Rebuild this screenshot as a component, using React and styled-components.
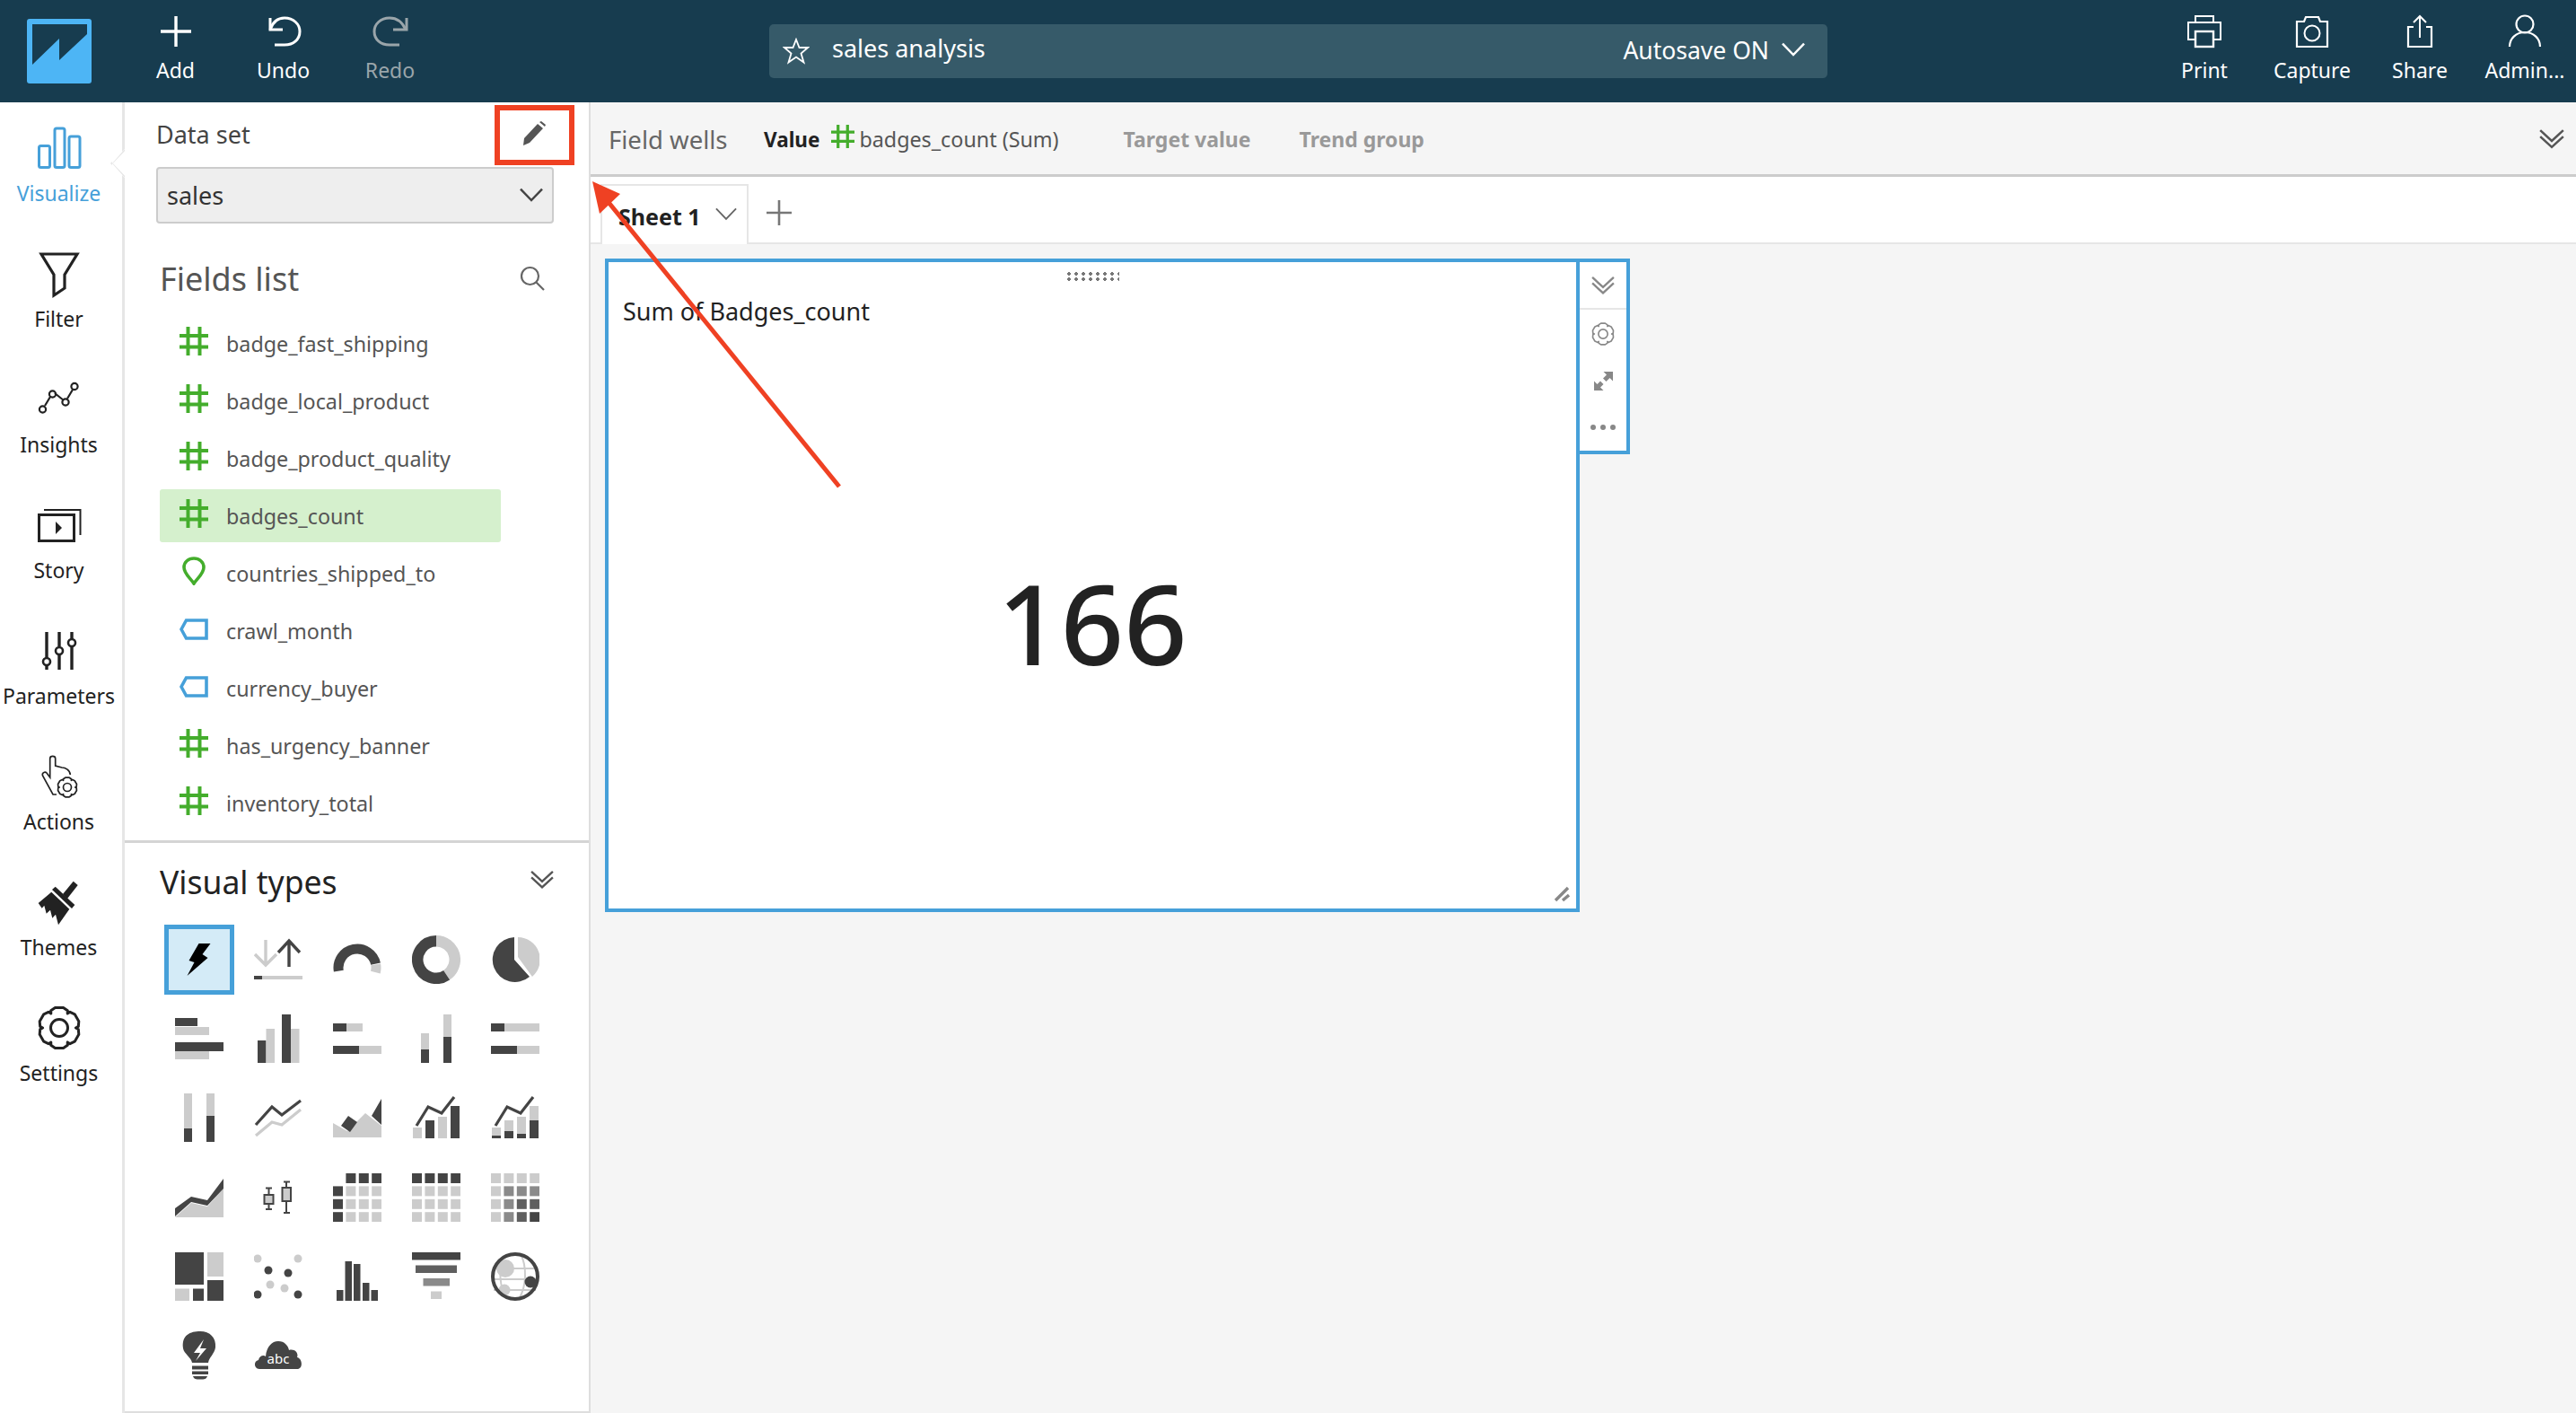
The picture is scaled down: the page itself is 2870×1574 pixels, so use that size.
import styled, { createGlobalStyle } from 'styled-components';

const DARK = '#444';
const LIGHT = '#ccc';
const MID = '#8a8a8a';
const DIM = '#5f5f5f';
const BLUE = '#46a0d9';
const GREEN = '#44ad2c';

const GlobalStyle = createGlobalStyle`
  html, body { margin: 0; padding: 0; background: #fff; }
  body { font-family: "Noto Sans", "Open Sans", sans-serif; }
  * { box-sizing: border-box; }
`;

const Page = styled.div`
  position: relative;
  width: 2870px;
  height: 1574px;
  display: flex;
  flex-direction: column;
  overflow: hidden;
`;

/* top bar */
const Header = styled.header`
  height: 114px;
  flex: none;
  display: flex;
  align-items: center;
  background: #173c4f;
`;

const LogoWrap = styled.div`
  width: 136px;
  padding-left: 30px;
  display: flex;
`;

const HeaderButton = styled.div`
  width: ${({ $w }) => $w || 119}px;
  height: 100%;
  display: flex;
  flex-direction: column;
  align-items: center;
  color: ${({ $disabled }) => ($disabled ? '#9aa5aa' : '#fff')};
  font-size: 23px;
  line-height: 30px;
  padding-top: 15px;
  white-space: nowrap;

  svg { height: 40px; width: 48px; margin-bottom: 8px; flex: none; }
`;

const TitleBar = styled.div`
  width: 1179px;
  height: 60px;
  margin-left: 364px;
  padding: 0 25px 0 15px;
  display: flex;
  align-items: center;
  border-radius: 5px;
  background: #365a69;
  color: #fff;
  font-size: 27px;
`;

const TitleText = styled.span`
  margin-left: 25px;
  padding-bottom: 7px;
  flex: 1;
`;

const Autosave = styled.span`
  display: flex;
  align-items: center;
  gap: 14px;
  padding-bottom: 3px;
  font-size: 26.5px;
`;

const HeaderRight = styled.div`
  margin-left: auto;
  height: 100%;
  display: flex;
`;

/* body */
const Body = styled.div`
  flex: 1;
  display: flex;
  min-height: 0;
`;

const Rail = styled.nav`
  position: relative;
  width: 139px;
  flex: none;
  padding: 21px 5px 0 0;
  border-right: 3px solid #e6e6e6;
  background: #fff;
`;

const RailPointer = styled.div`
  position: absolute;
  right: -3px;
  top: 52px;
  width: 16px;
  height: 32px;
  background: #fff;
  border-left: 2px solid #e6e6e6;
  clip-path: polygon(100% 0, 0 50%, 100% 100%);
  &::before {
    content: '';
    position: absolute;
    inset: 0;
    background: #e6e6e6;
    clip-path: polygon(100% 0, 0 50%, 100% 100%, 100% 93%, 6% 50%, 100% 7%);
  }
`;

const RailItem = styled.div`
  height: 140px;
  display: flex;
  flex-direction: column;
  align-items: center;
  color: ${({ $active }) => ($active ? BLUE : '#222')};
  font-size: 23px;
  line-height: 28px;
  white-space: nowrap;

  svg { width: 60px; height: 60px; margin-bottom: 6px; flex: none; }
`;

const Panel = styled.aside`
  position: relative;
  width: 519px;
  flex: none;
  padding-left: 35px;
  border-right: 2px solid #dedede;
  border-bottom: 2px solid #dedede;
  background: #fff;
`;

const DataHead = styled.div`
  height: 70px;
  margin-bottom: 2px;
  width: 443px;
  display: flex;
  align-items: center;
  justify-content: space-between;
  padding-right: 9px;
  color: #444;
  font-size: 27px;
`;

const RedBox = styled.div`
  position: absolute;
  left: 412px;
  top: 3px;
  width: 89px;
  height: 67px;
  border: 6px solid #ef4123;
`;

const Select = styled.div`
  width: 443px;
  height: 63px;
  padding: 0 10px;
  display: flex;
  align-items: center;
  justify-content: space-between;
  border: 2px solid #ccc;
  border-radius: 4px;
  background: #eee;
  color: #333;
  font-size: 27px;
`;

const ListHead = styled.div`
  height: 84px;
  margin-top: 20px;
  width: 443px;
  padding: 0 10px 2px 4px;
  display: flex;
  align-items: center;
  justify-content: space-between;
  color: #555;
  font-size: 36px;
`;

const FieldList = styled.div`
  display: flex;
  flex-direction: column;
  gap: 5px;
`;

const FieldRow = styled.div`
  width: 380px;
  height: 59px;
  margin-left: 4px;
  padding-left: 22px;
  display: flex;
  align-items: center;
  gap: 20px;
  border-radius: 3px;
  background: ${({ $selected }) => ($selected ? '#d5f0cd' : 'transparent')};
  color: #555;
  font-size: 23.3px;

  svg { width: 32px; height: 32px; flex: none; margin-top: -5px; }
`;

const Divider = styled.div`
  height: 3px;
  margin: 12px 0 0 -35px;
  background: #d4d4d4;
`;

const VisualHead = styled.div`
  width: 443px;
  height: 86px;
  padding: 0 0 0 4px;
  display: flex;
  align-items: center;
  justify-content: space-between;
  color: #222;
  font-size: 35.5px;

  svg { margin-top: -4px; }
`;

const VisualGrid = styled.div`
  margin-left: 4px;
  display: grid;
  grid-template-columns: repeat(5, 88px);
  grid-auto-rows: 88.2px;
`;

const VisualCell = styled.div`
  display: flex;
  align-items: center;
  justify-content: center;

  svg { width: 54px; height: 54px; }
`;

const SelectedTile = styled.div`
  width: 78px;
  height: 78px;
  display: flex;
  align-items: center;
  justify-content: center;
  border: 5px solid ${BLUE};
  background: #d4ebf7;
`;

/* work area */
const Work = styled.main`
  flex: 1;
  min-width: 0;
  display: flex;
  flex-direction: column;
`;

const WellsBar = styled.div`
  height: 83px;
  flex: none;
  padding: 2px 13px 0 20px;
  display: flex;
  align-items: center;
  border-bottom: 3px solid #ccc;
  background: #f5f5f5;
`;

const WellsTitle = styled.span`
  width: 173px;
  color: #666;
  font-size: 27.5px;
`;

const WellLabel = styled.span`
  color: ${({ $muted }) => ($muted ? '#999' : '#222')};
  font-size: ${({ $bold }) => ($bold ? 22.5 : 23)}px;
  font-weight: 700;
  margin-right: ${({ $gap }) => $gap || 0}px;
`;

const WellField = styled.span`
  display: flex;
  align-items: center;
  gap: 5px;
  margin-right: 72px;
  margin-left: 13px;
  color: #555;
  font-size: 23.3px;

  svg { width: 26px; height: 26px; margin-top: -6px; }
`;

const WellsEnd = styled.span`
  margin-left: auto;
  display: flex;
`;

const TabBar = styled.div`
  height: 75px;
  flex: none;
  padding-left: 11px;
  display: flex;
  align-items: flex-end;
  border-bottom: 2px solid #e6e6e6;
  background: #fff;
`;

const Tab = styled.div`
  width: 165px;
  height: 67px;
  margin-bottom: -2px;
  padding: 2px 11px 0 18px;
  display: flex;
  align-items: center;
  justify-content: space-between;
  border: 2px solid #e6e6e6;
  border-bottom: 0;
  background: #fff;
  color: #222;
  font-size: 25px;
  font-weight: 700;
  white-space: nowrap;

  svg { margin-top: -4px; }
`;

const AddTab = styled.div`
  height: 67px;
  margin-left: 19px;
  display: flex;
  align-items: center;
`;

const Canvas = styled.div`
  flex: 1;
  padding: 16px 0 0 16px;
  display: flex;
  align-items: flex-start;
  background: #f5f5f5;
`;

const Visual = styled.section`
  position: relative;
  width: 1086px;
  height: 728px;
  display: flex;
  flex-direction: column;
  border: 4px solid ${BLUE};
  background: #fff;
`;

const Grip = styled.div`
  position: absolute;
  left: 509px;
  top: 10px;
  width: 60px;
  height: 12px;
  background-image: radial-gradient(circle, #777 0 1.6px, transparent 2px);
  background-size: 8px 6px;
`;

const VisualTitle = styled.div`
  padding: 37px 0 9px 16px;
  color: #222;
  font-size: 27px;
  line-height: 36px;
`;

const BigNumber = styled.div`
  flex: 1;
  display: flex;
  align-items: center;
  justify-content: center;
  color: #222;
  font-size: 123px;
  font-weight: 500;
  line-height: 1;
`;

const ResizeHandle = styled.svg`
  position: absolute;
  right: 7px;
  bottom: 7px;
  width: 18px;
  height: 18px;
`;

const VisualTools = styled.div`
  width: 56px;
  height: 218px;
  display: flex;
  flex-direction: column;
  align-items: center;
  border: 4px solid ${BLUE};
  border-left: 0;
  background: #fff;
`;

const ToolTop = styled.div`
  width: 100%;
  height: 53px;
  flex: none;
  display: flex;
  align-items: center;
  justify-content: center;
  border-bottom: 2px solid #e6e6e6;
`;

const ToolItem = styled.div`
  height: ${({ $h }) => $h}px;
  flex: none;
  display: flex;
  align-items: center;
  justify-content: center;
`;

const ArrowOverlay = styled.svg`
  position: absolute;
  left: 0;
  top: 0;
  width: 2870px;
  height: 1574px;
  pointer-events: none;
`;

/* small drawings */
const ChevronDown = ({ size = 26, color = '#444', width = 2.5 }) => (
  <svg width={size} height={size * 0.62} viewBox="0 0 26 16" fill="none" stroke={color} strokeWidth={width}>
    <path d="M1 1.5 L13 14 L25 1.5" />
  </svg>
);

const DoubleChevron = ({ size = 26, color = '#555' }) => (
  <svg width={size} height={size * 0.84} viewBox="0 0 26 22" fill="none" stroke={color} strokeWidth="2.4">
    <path d="M1 2 L13 13 L25 2" />
    <path d="M1 8.5 L13 19.5 L25 8.5" />
  </svg>
);

const GearPath = ({ cx, cy, r, hole, color, width }) => {
  // six flat lobes with shallow valleys
  const pts = [];
  for (let i = 0; i < 6; i++) {
    const a = (Math.PI / 3) * i - Math.PI / 2;
    const p = (rad, ang) => `${cx + rad * Math.cos(ang)} ${cy + rad * Math.sin(ang)}`;
    pts.push(p(r, a - 0.2), p(r, a + 0.2), p(r * 0.93, a + 0.45), p(r * 0.8, a + Math.PI / 6), p(r * 0.93, a + Math.PI / 3 - 0.45));
  }
  return (
    <g fill="none" stroke={color} strokeWidth={width}>
      <path d={`M${pts.join(' L')} Z`} strokeLinejoin="round" />
      <circle cx={cx} cy={cy} r={hole} />
    </g>
  );
};

const Hash = ({ color = GREEN }) => (
  <svg viewBox="0 0 32 32" fill="none" stroke={color} strokeWidth="4">
    <path d="M9.5 0 V32 M22.5 0 V32 M0 10 H32 M0 22.5 H32" />
  </svg>
);

const Pin = () => (
  <svg viewBox="0 0 32 32" fill="none" stroke={GREEN} strokeWidth="3.6">
    <path d="M16 30 C12 24 5 19 5 12 C5 6 10 2 16 2 C22 2 27 6 27 12 C27 19 20 24 16 30 Z" />
  </svg>
);

const Tag = () => (
  <svg viewBox="0 0 32 32" fill="none" stroke={BLUE} strokeWidth="3.6">
    <path d="M7.5 7 H30 V27 H7.5 L2 17 Z" />
  </svg>
);

const fieldIcons = { num: Hash, geo: Pin, dim: Tag };

const fields = [
  ['badge_fast_shipping', 'num'],
  ['badge_local_product', 'num'],
  ['badge_product_quality', 'num'],
  ['badges_count', 'num', true],
  ['countries_shipped_to', 'geo'],
  ['crawl_month', 'dim'],
  ['currency_buyer', 'dim'],
  ['has_urgency_banner', 'num'],
  ['inventory_total', 'num'],
];

/* rail icons, 60x60 boxes */
const railIcons = {
  Visualize: (
    <svg viewBox="0 0 60 60" fill="none" stroke={BLUE} strokeWidth="3">
      <rect x="7.5" y="27.5" width="12" height="24" rx="2" />
      <rect x="25" y="8" width="11" height="43.5" rx="2" />
      <rect x="41" y="17" width="12" height="34.5" rx="2" />
    </svg>
  ),
  Filter: (
    <svg viewBox="0 0 60 60" fill="none" stroke="#222" strokeWidth="3.2">
      <path d="M10 8 H50 L36 31 V46 L24 54 V31 Z" />
    </svg>
  ),
  Insights: (
    <svg viewBox="0 0 60 60" fill="none" stroke="#222" strokeWidth="2.2">
      <path d="M14 37 L20 27 M25 23 L35 31 M39 29 L45 19" />
      <circle cx="11.5" cy="41" r="3.6" />
      <circle cx="22.5" cy="24" r="3.6" />
      <circle cx="37" cy="33" r="3.6" />
      <circle cx="47" cy="15.5" r="3.6" />
    </svg>
  ),
  Story: (
    <svg viewBox="0 0 60 60" fill="none" stroke="#222" strokeWidth="3">
      <rect x="7.5" y="18.5" width="39" height="29" />
      <path d="M13 13 H53.5 V41" strokeWidth="2" />
      <path d="M26 26 L33 33 L26 40 Z" fill="#222" stroke="none" />
    </svg>
  ),
  Parameters: (
    <svg viewBox="0 0 60 60" fill="none" stroke="#222" strokeWidth="3.4">
      <path d="M16 9 V38 M16 47 V51 M30 9 V25 M30 34 V51 M44 9 V17 M44 26 V51" />
      <circle cx="16" cy="42" r="4" strokeWidth="2.6" />
      <circle cx="30" cy="30" r="4" strokeWidth="2.6" />
      <circle cx="44" cy="21" r="4" strokeWidth="2.6" />
    </svg>
  ),
  Actions: (
    <svg viewBox="0 0 60 60" fill="none" stroke="#222" strokeWidth="1.7">
      <path d="M27 50 H23 L11.5 29 C10.5 26 14 24 16 26 L19.7 31 V10 C19.7 6.5 25.7 6.5 25.7 10 V18 L33 20 C37 20 42 23 42.3 28" />
      <GearPath cx={39} cy={42} r={11} hole={4.5} color="#222" width={1.7} />
    </svg>
  ),
  Themes: (
    <svg viewBox="0 0 60 60" fill="#222">
      <path d="M45.7 6.7 L50.7 11 L39 26 L34 21 Z" />
      <path d="M25.7 12.7 L47.3 33 L44 37 L22 16 Z" />
      <path d="M21.3 18.7 L41.3 37.7 L29 55.3 L26 43.7 L22.3 47.7 L20 38.7 L15.7 42.7 L13.3 33.7 L10.7 36.7 L6.7 31 Z" />
    </svg>
  ),
  Settings: (
    <svg viewBox="0 0 60 60">
      <GearPath cx={30} cy={30} r={23} hole={9.5} color="#222" width={3} />
    </svg>
  ),
};

/* visual type glyphs, 54x54 */
const R = ({ x, y, w, h, f = DARK }) => <rect x={x} y={y} width={w} height={h} fill={f} />;

const pt = (cx, cy, r, deg) => {
  const a = ((deg - 90) * Math.PI) / 180;
  return [cx + r * Math.cos(a), cy + r * Math.sin(a)];
};

const arc = (cx, cy, r, from, to) => {
  const [x0, y0] = pt(cx, cy, r, from);
  const [x1, y1] = pt(cx, cy, r, to);
  return `M${x0} ${y0} A${r} ${r} 0 ${to - from > 180 ? 1 : 0} 1 ${x1} ${y1}`;
};

const heat = (rows) =>
  rows.flatMap((row, r) =>
    row.map((c, i) => (c ? <R key={`${r}-${i}`} x={i * 14.4} y={r * 14.4} w={11} h={11} f={c} /> : null)),
  );

const L = LIGHT;
const D = DARK;
const M = MID;
const G = DIM;

const glyphs = [
  <path key="0" d="M30 12 H43 L34 24 L40 28 L17 48 L25 33 L19 31 Z" fill="#000" transform="translate(-3.5 -3)" />,
  <g key="1">
    <path d="M13 5 V31 M1 21 L13 33 L25 21" fill="none" stroke={L} strokeWidth="3.4" />
    <path d="M39 6 V35 M27 19 L39 6 L51 19" fill="none" stroke={D} strokeWidth="3.4" />
    <R x={0} y={45} w={54} h={4} f={L} />
    <R x={0} y={45} w={9} h={4} />
  </g>,
  <g key="2" fill="none" strokeWidth="11">
    <path d={arc(27, 36, 21, -100, 78)} stroke={D} />
    <path d={arc(27, 36, 21, 80, 104)} stroke={L} />
  </g>,
  <g key="3" fill="none" strokeWidth="12.5">
    <path d={arc(27, 27, 20.75, 0, 146)} stroke={L} />
    <path d={arc(27, 27, 20.75, 146, 360)} stroke={D} />
  </g>,
  <g key="4">
    <path d="M26 2 A25 25 0 1 0 43 46 L26 27 Z" fill={D} />
    <path d="M30 2 A25 25 0 0 1 46 46 L30 24 Z" fill={L} />
  </g>,
  <g key="5"><R x={0} y={4} w={25} h={9} /><R x={0} y={14} w={38} h={9} f={L} /><R x={0} y={31} w={54} h={10} /><R x={0} y={41} w={38} h={9} f={L} /></g>,
  <g key="6"><R x={4} y={29} w={9.5} h={25} /><R x={13.5} y={16} w={9.5} h={38} f={L} /><R x={31} y={0} w={10} h={54} /><R x={41} y={16} w={9.5} h={38} f={L} /></g>,
  <g key="7"><R x={0} y={10} w={15} h={9} /><R x={15} y={10} w={18} h={9} f={L} /><R x={0} y={35} w={29} h={9} /><R x={29} y={35} w={25} h={9} f={L} /></g>,
  <g key="8"><R x={10} y={21} w={9} h={18} f={L} /><R x={10} y={39} w={9} h={15} /><R x={35} y={0} w={9} h={25} f={L} /><R x={35} y={25} w={9} h={29} /></g>,
  <g key="9"><R x={0} y={10} w={15} h={9} /><R x={15} y={10} w={39} h={9} f={L} /><R x={0} y={35} w={29} h={9} /><R x={29} y={35} w={25} h={9} f={L} /></g>,
  <g key="10"><R x={10} y={0} w={9} h={39} f={L} /><R x={10} y={39} w={9} h={15} /><R x={35} y={0} w={9} h={25} f={L} /><R x={35} y={25} w={9} h={29} /></g>,
  <g key="11" fill="none" strokeWidth="3.2">
    <path d="M2 47 L20 32 L31 35 L52 18" stroke={L} />
    <path d="M2 35 L20 15 L31 24 L52 8" stroke={D} />
  </g>,
  <g key="12">
    <path d="M0 33 L16 42 L36 22 L54 36 V49 H0 Z" fill={L} />
    <path d="M9 36 L17 25 L27 32 L19 43 Z M43 25 L54 6 V35 Z" fill={D} />
  </g>,
  <g key="13">
    <R x={1} y={38} w={10} h={12} f={L} /><R x={15} y={30} w={10} h={20} /><R x={29} y={26} w={10} h={24} f={L} /><R x={43} y={14} w={10} h={36} />
    <path d="M5 36 L18 15 L33 22 L47 4" fill="none" stroke={D} strokeWidth="3.2" />
  </g>,
  <g key="14">
    <R x={1} y={38} w={10} h={9} f={L} /><R x={1} y={47} w={10} h={3} />
    <R x={15} y={30} w={10} h={12} f={L} /><R x={15} y={42} w={10} h={8} />
    <R x={29} y={26} w={10} h={19} f={L} /><R x={29} y={45} w={10} h={5} />
    <R x={43} y={14} w={10} h={16} f={L} /><R x={43} y={30} w={10} h={20} />
    <path d="M5 36 L18 15 L33 22 L47 4" fill="none" stroke={D} strokeWidth="3.2" />
  </g>,
  <g key="15">
    <path d="M0 49 L18 33 L36 37 L54 17 V49 Z" fill={L} />
    <path d="M0 39 L18 26 L36 30 L54 6 V17 L36 36 L18 32 L0 48 Z" fill={D} />
  </g>,
  <g key="16" fill="none" stroke={D} strokeWidth="2">
    <path d="M16.5 16 V24 M16.5 34 V40 M13 16.5 H20 M13 40 H20 M36 9 V16 M36 31 V44 M33 9.5 H40 M33 44 H40" />
    <rect x="11.5" y="24" width="10" height="10" fill={L} />
    <rect x="31.5" y="16" width="9.5" height="15" fill={L} />
  </g>,
  <g key="17">{heat([[0, D, D, D], [D, L, L, L], [D, L, L, L], [D, L, L, L]])}</g>,
  <g key="18">{heat([[D, D, D, D], [L, L, L, L], [L, L, L, L], [L, L, L, L]])}</g>,
  <g key="19">{heat([[L, L, L, L], [L, M, M, M], [L, M, G, G], [L, M, G, D]])}</g>,
  <g key="20"><R x={0} y={0} w={32} h={36} /><R x={36} y={0} w={18} h={27} f={L} /><R x={0} y={40.5} w={16} h={13.5} f={L} /><R x={20} y={40.5} w={12} h={13.5} /><R x={36} y={31} w={18} h={23} /></g>,
  <g key="21">
    {[[4, 7, L], [49, 7, L], [16, 20, D], [38, 23, D], [18, 36, L], [34, 40, L], [4, 47, D], [49, 47, D]].map(([x, y, c]) => (
      <circle key={`${x}-${y}`} cx={x} cy={y} r="4.5" fill={c} />
    ))}
  </g>,
  <g key="22"><R x={4} y={42} w={7.5} h={12} /><R x={13.5} y={10} w={7.5} h={44} /><R x={23} y={13} w={7.5} h={41} /><R x={33} y={34} w={7.5} h={20} /><R x={42.5} y={42} w={7.5} h={12} /></g>,
  <g key="23"><R x={0} y={0} w={54} h={8.5} /><R x={4} y={14.5} w={46} h={8.5} f={G} /><R x={12.5} y={29} w={29.5} h={8.5} f={M} /><R x={21} y={43.5} w={12} h={8.5} f={L} /></g>,
  <g key="24">
    <path d="M3 18 H51 M3 30 H51 M3 42 H50 M33 2 C40 15 40 38 31 52 M15 4 C8 18 9 40 18 50" fill="none" stroke={L} strokeWidth="2" />
    <circle cx="16" cy="18" r="10" fill={L} />
    <circle cx="15" cy="42" r="6.5" fill={L} />
    <circle cx="27" cy="27" r="25" fill="none" stroke={D} strokeWidth="4" />
    <circle cx="44" cy="33" r="6.5" fill={D} />
  </g>,
  <g key="25">
    <path d="M9 19 C7 4 17 0 28 0 C39 0 46 7 45 18 C44 25 38 29 37 35 H19 C18 29 10 25 9 19 Z" fill={D} />
    <path d="M32 9 L21 24 H28 L23 33 L35 19 H28 Z" fill="#fff" />
    <R x={19} y={38.5} w={18} h={4} />
    <R x={19} y={44.5} w={18} h={3.5} />
    <path d="M20 50 H36 C35 53 33 53.5 28 53.5 C23 53.5 21 53 20 50 Z" fill={D} />
  </g>,
  <g key="26">
    <path d="M6 42 C0 42 -1 33 5 32 C6 27 11 26 13 28 C14 17 20 11 27 11 C34 11 38 16 39 21 C45 19 50 24 48 29 C54 30 55 42 48 42 Z" fill={D} />
    <text x="27" y="36" textAnchor="middle" fill="#fff" fontSize="15" fontFamily="Noto Sans, sans-serif">abc</text>
  </g>,
];

const LogoMark = () => (
  <svg width="72" height="72" viewBox="0 0 72 72">
    <rect width="72" height="72" rx="3" fill="#4db5f5" />
    <path d="M6 6 H67 V17 L36 46 V22 L6 51 Z" fill="#173c4f" />
  </svg>
);

const HeaderIcon = ({ children }) => (
  <svg viewBox="0 0 48 40" fill="none" stroke="currentColor" strokeWidth="2">
    {children}
  </svg>
);

const App = () => (
  <Page>
    <GlobalStyle />
    <Header>
      <LogoWrap>
        <LogoMark />
      </LogoWrap>
      <HeaderButton>
        <HeaderIcon>
          <path d="M24 3 V37 M7 20 H41" strokeWidth="3.4" />
        </HeaderIcon>
        Add
      </HeaderButton>
      <HeaderButton $w={121}>
        <HeaderIcon>
          <path d="M9 5 V18 H23" strokeWidth="3" />
          <path d="M9 18 C12 9 18 5 25 5 C35 5 42 12 42 20 C42 29 35 35 25 35 H14" strokeWidth="3" />
        </HeaderIcon>
        Undo
      </HeaderButton>
      <HeaderButton $w={117} $disabled>
        <HeaderIcon>
          <path d="M42 5 V18 H27" strokeWidth="3" />
          <path d="M41 18 C37 9 31 5 23 5 C13 5 6 12 6 20 C6 29 13 35 23 35 H34" strokeWidth="3" />
        </HeaderIcon>
        Redo
      </HeaderButton>
      <TitleBar>
        <svg width="30" height="30" viewBox="0 0 30 30" fill="none" stroke="#fff" strokeWidth="1.8">
          <path d="M15 2 L18.5 11 H28 L20.5 17.5 L23.5 27.5 L15 21.5 L6.5 27.5 L9.5 17.5 L2 11 H11.5 Z" />
        </svg>
        <TitleText>sales analysis</TitleText>
        <Autosave>
          Autosave ON
          <ChevronDown color="#fff" />
        </Autosave>
      </TitleBar>
      <HeaderRight>
        <HeaderButton $w={120}>
          <HeaderIcon>
            <path d="M14 10 V3 H34 V10 M14 29 H6 V10 H42 V29 H34" />
            <rect x="14" y="20" width="20" height="17" strokeWidth="2.4" />
          </HeaderIcon>
          Print
        </HeaderButton>
        <HeaderButton $w={120}>
          <HeaderIcon>
            <path d="M7 9 H15 L17 4 H31 L33 9 H41 V37 H7 Z" strokeWidth="2.2" />
            <circle cx="24" cy="22" r="8.5" />
          </HeaderIcon>
          Capture
        </HeaderButton>
        <HeaderButton $w={120}>
          <HeaderIcon>
            <path d="M24 3 V27 M17 10 L24 3 L31 10" />
            <path d="M17 15 H11 V37 H37 V15 H31" strokeWidth="2.2" />
          </HeaderIcon>
          Share
        </HeaderButton>
        <HeaderButton $w={114}>
          <HeaderIcon>
            <circle cx="24" cy="12" r="9.5" strokeWidth="2.2" />
            <path d="M7 37 C7 28 14 21 24 21 C34 21 41 28 41 37" strokeWidth="2.2" />
          </HeaderIcon>
          Admin...
        </HeaderButton>
      </HeaderRight>
    </Header>
    <Body>
      <Rail>
        <RailPointer />
        {Object.entries(railIcons).map(([label, icon]) => (
          <RailItem key={label} $active={label === 'Visualize'}>
            {icon}
            {label}
          </RailItem>
        ))}
      </Rail>
      <Panel>
        <DataHead>
          Data set
          <svg width="26" height="28" viewBox="0 0 26 28" fill="#555">
            <path d="M1 27 L2 19 L17 3 L23 8 L8 24 Z M19 1 L21 0 L26 4 L25 6 Z" />
          </svg>
        </DataHead>
        <RedBox />
        <Select>
          sales
          <ChevronDown />
        </Select>
        <ListHead>
          Fields list
          <svg width="28" height="28" viewBox="0 0 28 28" fill="none" stroke="#666" strokeWidth="2.2">
            <circle cx="11.5" cy="11.5" r="9.5" />
            <path d="M18 18 L27 27" />
          </svg>
        </ListHead>
        <FieldList>
          {fields.map(([name, kind, selected]) => {
            const Icon = fieldIcons[kind];
            return (
              <FieldRow key={name} $selected={selected}>
                <Icon />
                {name}
              </FieldRow>
            );
          })}
        </FieldList>
        <Divider />
        <VisualHead>
          Visual types
          <DoubleChevron />
        </VisualHead>
        <VisualGrid>
          {glyphs.map((glyph, i) => {
            const icon = <svg viewBox="0 0 54 54">{glyph}</svg>;
            return <VisualCell key={i}>{i === 0 ? <SelectedTile>{icon}</SelectedTile> : icon}</VisualCell>;
          })}
        </VisualGrid>
      </Panel>
      <Work>
        <WellsBar>
          <WellsTitle>Field wells</WellsTitle>
          <WellLabel $bold>Value</WellLabel>
          <WellField>
            <Hash />
            badges_count (Sum)
          </WellField>
          <WellLabel $muted $gap={54}>Target value</WellLabel>
          <WellLabel $muted>Trend group</WellLabel>
          <WellsEnd>
            <DoubleChevron size={28} />
          </WellsEnd>
        </WellsBar>
        <TabBar>
          <Tab>
            Sheet 1
            <ChevronDown size={24} color="#666" width={2} />
          </Tab>
          <AddTab>
            <svg width="30" height="30" viewBox="0 0 30 30" stroke="#777" strokeWidth="2.6">
              <path d="M15 1 V29 M1 15 H29" />
            </svg>
          </AddTab>
        </TabBar>
        <Canvas>
          <Visual>
            <Grip />
            <VisualTitle>Sum of Badges_count</VisualTitle>
            <BigNumber>166</BigNumber>
            <ResizeHandle viewBox="0 0 18 18" stroke="#888" strokeWidth="3.4">
              <path d="M2 16 L16 2 M10 16 L17 10" />
            </ResizeHandle>
          </Visual>
          <VisualTools>
            <ToolTop>
              <DoubleChevron color="#888" />
            </ToolTop>
            <ToolItem $h={53}>
              <svg width="28" height="28" viewBox="0 0 60 60">
                <GearPath cx={30} cy={30} r={26} hole={11} color="#888" width={3.5} />
              </svg>
            </ToolItem>
            <ToolItem $h={53}>
              <svg width="21" height="21" viewBox="0 0 21 21" fill="#888">
                <path d="M21 0 V10.5 L17.5 7 L13.5 11 L10 7.5 L14 3.5 L10.5 0 Z M0 21 V10.5 L3.5 14 L7 10.5 L10.5 14 L7 17.5 L10.5 21 Z" />
              </svg>
            </ToolItem>
            <ToolItem $h={50}>
              <svg width="30" height="8" viewBox="0 0 30 8" fill="#888">
                <circle cx="4" cy="4" r="3" />
                <circle cx="15" cy="4" r="3" />
                <circle cx="26" cy="4" r="3" />
              </svg>
            </ToolItem>
          </VisualTools>
        </Canvas>
      </Work>
    </Body>
    <ArrowOverlay viewBox="0 0 2870 1574">
      <path d="M935 542 L672 218" stroke="#ef4123" strokeWidth="5" fill="none" />
      <path d="M660 202 L691 216 L668 238 Z" fill="#ef4123" />
    </ArrowOverlay>
  </Page>
);

export default App;
